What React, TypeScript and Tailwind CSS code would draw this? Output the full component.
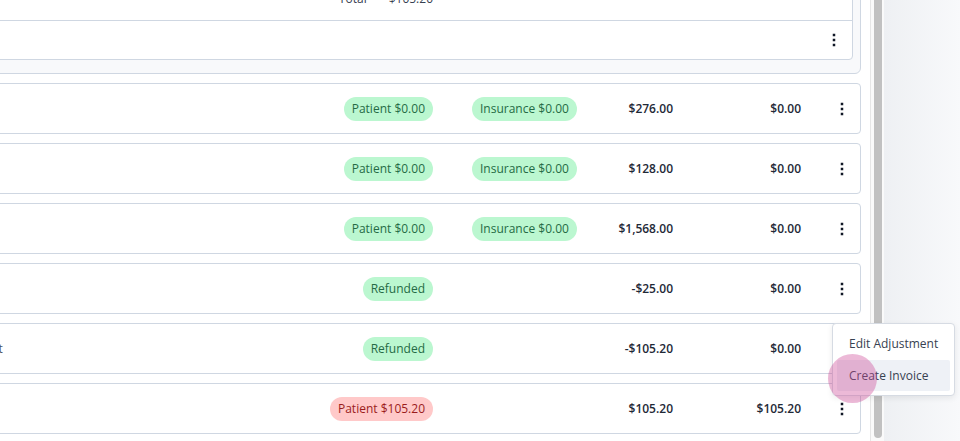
import React from "react";

type Line = {
  desc: string;
  patient?: { label: string; owed?: boolean };
  insurance?: string;
  amount: string;
  balance: string;
};

const LINES: Line[] = [
  { desc: "Visit", patient: { label: "Patient $0.00" }, insurance: "Insurance $0.00", amount: "$276.00", balance: "$0.00" },
  { desc: "Visit", patient: { label: "Patient $0.00" }, insurance: "Insurance $0.00", amount: "$128.00", balance: "$0.00" },
  { desc: "Visit", patient: { label: "Patient $0.00" }, insurance: "Insurance $0.00", amount: "$1,568.00", balance: "$0.00" },
  { desc: "Refund", patient: { label: "Refunded" }, amount: "-$25.00", balance: "$0.00" },
  { desc: "Adjustment", patient: { label: "Refunded" }, amount: "-$105.20", balance: "$0.00" },
  { desc: "Visit", patient: { label: "Patient $105.20", owed: true }, amount: "$105.20", balance: "$105.20" },
];

const Kebab = () => (
  <svg width="4" height="14" viewBox="0 0 4 14" className="block" aria-label="More">
    <rect x="0.75" y="0.75" width="2.5" height="2.5" fill="#111827" />
    <rect x="0.75" y="5.75" width="2.5" height="2.5" fill="#111827" />
    <rect x="0.75" y="10.75" width="2.5" height="2.5" fill="#111827" />
  </svg>
);

const Pill = ({ children, owed }: { children: React.ReactNode; owed?: boolean }) => (
  <span
    className={
      owed
        ? "inline-flex h-[24px] items-center whitespace-nowrap rounded-full bg-red-200 px-[8px] text-[#9b1c1c]"
        : "inline-flex h-[24px] items-center whitespace-nowrap rounded-full bg-[#bbf7d0] px-[8px] text-[#256b45]"
    }
  >
    {children}
  </span>
);

function Row({ line }: { line: Line }) {
  return (
    <div className="flex h-[51px] items-center rounded-[4px] border border-[#cfd7e2] bg-white pl-[17px]">
      <div className="flex-1 whitespace-nowrap text-[#4b5563]">{line.desc}</div>
      <div className="flex w-[140px] justify-end">
        {line.patient && <Pill owed={line.patient.owed}>{line.patient.label}</Pill>}
      </div>
      <div className="flex w-[147px] pl-[39px]">
        {line.insurance && <Pill>{line.insurance}</Pill>}
      </div>
      <div className="w-[93px] text-right font-semibold text-[#1f2937]">{line.amount}</div>
      <div className="w-[128px] text-right font-semibold text-[#1f2937]">{line.balance}</div>
      <div className="flex w-[59px] justify-end pr-[16px]">
        <Kebab />
      </div>
    </div>
  );
}

export default function App() {
  return (
    <div className="relative flex h-[441px] w-[960px] overflow-hidden bg-white font-['Open_Sans',sans-serif] text-[12px]">
      <div className="w-[870px] shrink-0 overflow-hidden">
        <div className="-ml-[80px] -mt-[40px] mr-[9px] flex flex-col gap-[9px]">
          <div className="rounded-b-[6px] border border-[#cfd7e2] bg-[#f8f9fb] pt-[8px] pr-[7px] pb-[13px]">
            <div className="rounded-[4px] border border-[#cfd7e2] bg-white">
              <div className="flex h-[51px] justify-end gap-[22px] border-b border-[#cfd7e2] pt-[19px] pr-[419px] leading-[20px] text-[#374151]">
                <span>Total</span>
                <span>$105.20</span>
              </div>
              <div className="flex h-[38px] items-center justify-end pr-[16px]">
                <Kebab />
              </div>
            </div>
          </div>
          {LINES.map((line, i) => (
            <Row key={i} line={line} />
          ))}
        </div>
      </div>

      <div className="h-full w-[14px] shrink-0 border-l border-[#e6e6e6] bg-[#fafafa] pl-[3px]">
        <div className="h-[438px] w-[8px] rounded-b-full bg-[#c1c1c1]" />
      </div>

      <div className="flex-1 bg-gradient-to-r from-[#eef0f3] to-[#f8f9fb]" />

      <div className="absolute left-[832px] top-[323px] w-[123px] rounded-[4px] border border-[#d6dbe3] bg-white p-[4px] text-[#374151] shadow-[0_2px_6px_rgba(0,0,0,0.08)]">
        <div className="flex h-[32px] items-center whitespace-nowrap pl-[12px]">Edit Adjustment</div>
        <div className="flex h-[31px] items-center whitespace-nowrap rounded-[2px] bg-[#eef1f6] pl-[12px]">Create Invoice</div>
      </div>

      <div className="pointer-events-none absolute left-[828px] top-[354px] h-[49px] w-[49px] rounded-full bg-[rgba(205,70,150,0.38)]" />
    </div>
  );
}
